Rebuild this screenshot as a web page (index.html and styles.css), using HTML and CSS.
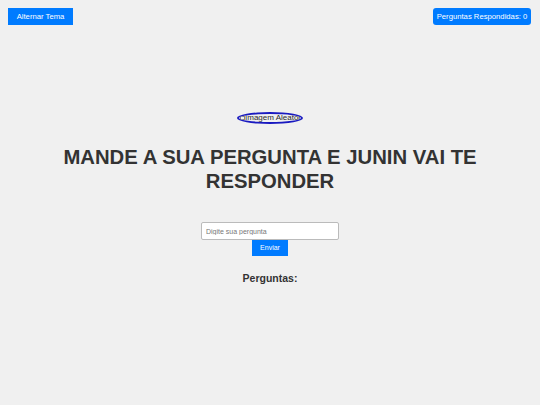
FILE: index.html
```html
<!DOCTYPE html>
<html lang="pt-BR">
<head>
<meta charset="utf-8">
<title>Junin</title>
<link rel="stylesheet" href="styles.css">
</head>
<body>
<header class="topbar">
  <button class="btn btn-theme">Alternar Tema</button>
  <button class="btn btn-count">Perguntas Respondidas: 0</button>
</header>
<main class="content">
  <div class="avatar"><span class="broken"></span><span class="alt">Imagem Aleatória</span></div>
  <h1 class="title">MANDE A SUA PERGUNTA E JUNIN VAI TE RESPONDER</h1>
  <form class="ask">
    <input class="ask-input" type="text" placeholder="Digite sua pergunta">
    <button class="btn btn-send" type="button">Enviar</button>
  </form>
  <h2 class="subtitle">Perguntas:</h2>
</main>
</body>
</html>
```
FILE: styles.css
```css
html, body {
  margin: 0;
  padding: 0;
  background: #f0f0f0;
  font-family: "Liberation Sans", Arial, sans-serif;
  color: #333;
}
.topbar {
  display: flex;
  justify-content: space-between;
  align-items: flex-start;
  padding: 8px 9px 0 8px;
}
.btn {
  font-family: "Liberation Sans", Arial, sans-serif;
  background: #007bff;
  color: #fff;
  border: none;
  font-size: 7.7px;
  line-height: 17px;
  height: 17px;
  padding: 0;
  margin: 0;
  cursor: pointer;
}
.btn-theme {
  width: 65px;
  border-radius: 0;
}
.btn-count {
  width: 98px;
  border-radius: 3px;
}
.content {
  display: flex;
  flex-direction: column;
  align-items: center;
  padding-top: 87px;
}
.avatar {
  box-sizing: border-box;
  width: 66px;
  height: 12px;
  border: 2px solid #1a1ac0;
  border-radius: 50%;
  display: flex;
  align-items: center;
  overflow: hidden;
  white-space: nowrap;
  font-size: 8px;
  color: #2a2a2a;
}
.broken {
  flex: none;
  width: 5px;
  height: 4px;
  margin-left: 1px;
  border: 1px solid #888;
  box-sizing: border-box;
}
.alt {
  margin-left: 0;
  line-height: 8px;
}
.title {
  margin: 21px 0 0;
  font-size: 20.3px;
  line-height: 24px;
  font-weight: bold;
  text-align: center;
  max-width: 440px;
  color: #333;
}
.ask {
  margin-top: 29px;
  display: flex;
  flex-direction: column;
  align-items: center;
}
.ask-input {
  box-sizing: border-box;
  width: 138px;
  height: 18px;
  border: 1px solid #bbb;
  border-radius: 2px;
  background: #fff;
  padding: 0 4px;
  font-family: "Liberation Sans", Arial, sans-serif;
  font-size: 7px;
  margin: 0;
}
.ask-input::placeholder {
  color: #777;
}
.btn-send {
  width: 36px;
  height: 16px;
  line-height: 16px;
  font-size: 7px;
}
.subtitle {
  margin: 15px 0 0;
  font-size: 10.5px;
  line-height: 14px;
  font-weight: bold;
  color: #333;
}
```
